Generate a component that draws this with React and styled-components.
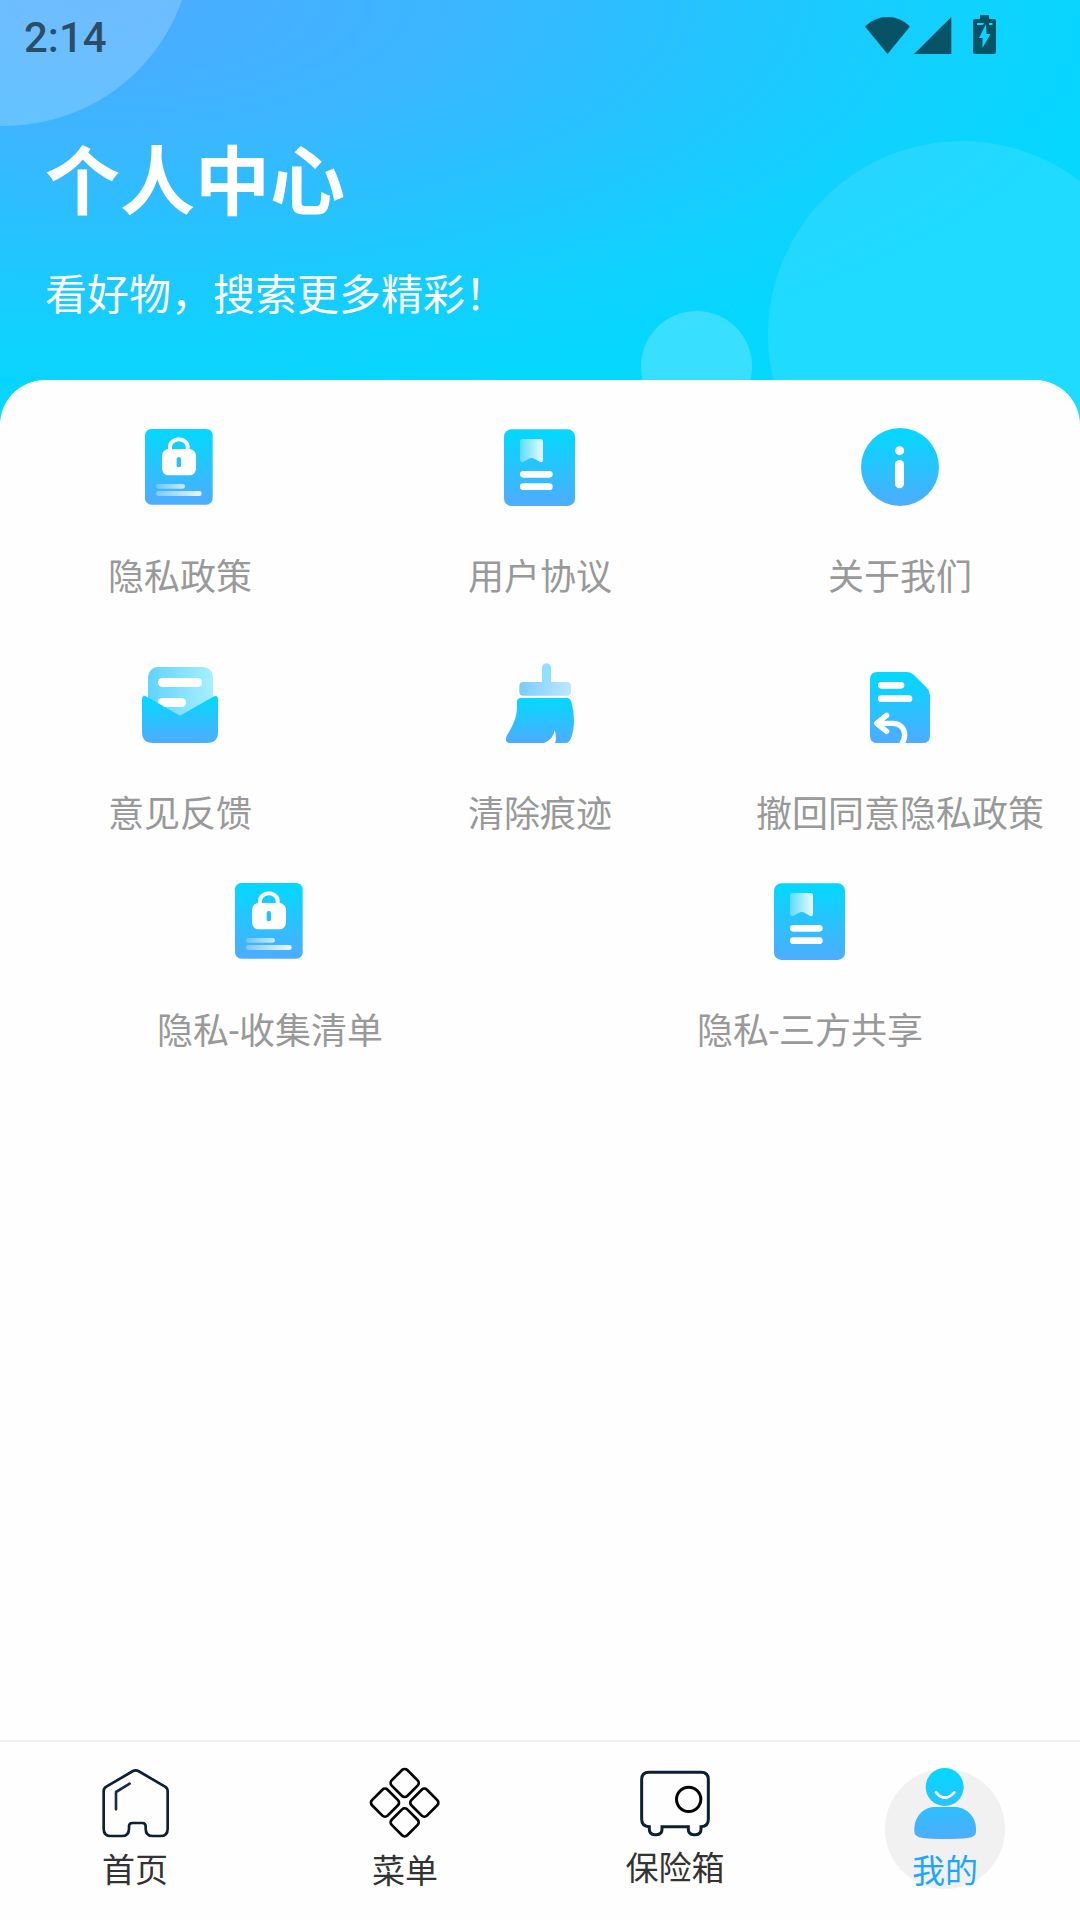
import React, { useState } from 'react'
import styled, { createGlobalStyle } from 'styled-components'

const GlobalStyle = createGlobalStyle`
  * {
    box-sizing: border-box;
  }

  body {
    margin: 0;
    background: #fefefe;
    font-family: "Noto Sans CJK SC", "Noto Sans", sans-serif;
  }
`

/* ---------- gradients shared by all icons ---------- */

const Gradients = () => (
    <Defs aria-hidden="true">
        <defs>
            <linearGradient id="main" x1="0" y1="0" x2="0" y2="1">
                <stop offset="0.05" stopColor="#05d7ff" />
                <stop offset="1" stopColor="#4facff" />
            </linearGradient>
            <linearGradient id="fade" x1="0" y1="0" x2="1" y2="0">
                <stop offset="0" stopColor="#fff" stopOpacity="0.3" />
                <stop offset="1" stopColor="#fff" stopOpacity="0.9" />
            </linearGradient>
            <linearGradient id="paper" x1="0" y1="0" x2="1" y2="0">
                <stop offset="0" stopColor="#60d3ff" />
                <stop offset="1" stopColor="#a6f0ff" />
            </linearGradient>
            <linearGradient id="handle" x1="0" y1="0" x2="1" y2="0">
                <stop offset="0" stopColor="#7accff" />
                <stop offset="1" stopColor="#bce8ff" />
            </linearGradient>
            <linearGradient id="user" gradientUnits="userSpaceOnUse" x1="0" y1="114" x2="0" y2="327">
                <stop offset="0.05" stopColor="#05d7ff" />
                <stop offset="1" stopColor="#4facff" />
            </linearGradient>
        </defs>
    </Defs>
)

/* ---------- menu icons ---------- */

const LockIcon = () => (
    <svg viewBox="135 36 270 270">
        <rect x="165" y="57" width="203" height="227" rx="19" fill="url(#main)" />
        <path d="M240 122v-12a26.500 22 0 0 1 53 0v12" fill="none" stroke="#fff" strokeWidth="12" />
        <rect x="216" y="117" width="102" height="79" rx="20" fill="#fff" />
        <rect x="260" y="141" width="13" height="31" rx="6.500" fill="#26c2ff" />
        <rect x="198" y="222" width="87" height="14" rx="7" fill="url(#fade)" opacity="0.8" />
        <rect x="198" y="243" width="137" height="15" rx="7" fill="url(#fade)" />
    </svg>
)

const BookIcon = () => (
    <svg viewBox="135 36 270 270">
        <rect x="162" y="58" width="213" height="230" rx="22" fill="url(#main)" />
        <path d="M218 87h53q8 0 8 8v55q0 8-8 6q-5-1-15-8l-6-3q-5-2-10 0l-6 3q-10 7-15 8q-9 2-9-6V95q0-8 8-8z" fill="url(#fade)" />
        <rect x="210" y="183" width="98" height="20" rx="10" fill="#fff" />
        <rect x="210" y="220" width="98" height="20" rx="10" fill="#fff" />
    </svg>
)

const InfoIcon = () => (
    <svg viewBox="345 36 270 270">
        <circle cx="480" cy="171" r="117" fill="url(#main)" />
        <circle cx="479" cy="122" r="13.500" fill="#fff" />
        <rect x="465" y="150" width="27" height="85" rx="13.500" fill="#fff" />
    </svg>
)

const MailIcon = () => (
    <svg viewBox="135 27 270 270">
        <rect x="174" y="51" width="195" height="170" rx="30" fill="url(#paper)" />
        <rect x="204" y="84" width="132" height="27" rx="13" fill="#fff" />
        <rect x="204" y="144" width="84" height="27" rx="13" fill="#fff" />
        <path d="M156 147q0-12 12-8l102 58l102-58q12-4 12 8v99q0 33-33 33H189q-33 0-33-33z" fill="url(#main)" />
    </svg>
)

const BroomIcon = () => (
    <svg viewBox="135 27 270 270">
        <path d="M276 98V53a13.500 13.500 0 0 1 27 0v45z" fill="#8fe2ff" />
        <rect x="208" y="96" width="155" height="41" rx="12" fill="url(#handle)" />
        <path d="M213 144h138q9 0 13 11q8 27 8 56q0 30-9 54q-5 14-16 14H315q6-16-1-38q-4 27-32 38H181q-16 0-13-16q1-5 9-17q24-40 24-72v-18q0-12 12-12z" fill="url(#main)" />
    </svg>
)

const RevokeIcon = () => (
    <svg viewBox="345 27 270 270">
        <path d="M412 66h88q13 0 22 9l39 39q9 9 9 22v121q0 22-22 22H412q-22 0-22-22V88q0-22 22-22z" fill="url(#main)" />
        <rect x="414" y="96" width="79" height="20" rx="10" fill="#fff" />
        <rect x="414" y="136" width="103" height="20" rx="10" fill="#fff" />
        <path d="M440 196l-30 24l30 24" fill="none" stroke="#fff" strokeWidth="16" strokeLinecap="round" strokeLinejoin="round" />
        <path d="M414 220h46a34 34 0 0 1 34 34q0 16-10 28" fill="none" stroke="#fff" strokeWidth="16" />
    </svg>
)

/* ---------- bottom bar icons ---------- */

const HomeIcon = () => (
    <svg viewBox="105 99 240 240" fill="none" stroke="#0b2035" strokeWidth="8" strokeLinecap="round" strokeLinejoin="round">
        <path d="M219 123q8-4 16 0l80 47q8 5 8 13v113q0 22-22 22h-22q-22 0-22-22v-7q0-10-10-10h-30q-10 0-10 10v7q0 22-22 22h-32q-22 0-22-22V183q0-8 8-13z" />
        <path d="M168 238v-52l41-25" stroke="#1c2c42" />
    </svg>
)

const GridIcon = () => (
    <svg viewBox="915 99 240 240" fill="none" stroke="#000" strokeWidth="8">
        <rect x="1001" y="126" width="66" height="66" rx="11" transform="rotate(45 1034 159)" />
        <rect x="942" y="185" width="66" height="66" rx="11" transform="rotate(45 975 218)" />
        <rect x="1060" y="185" width="66" height="66" rx="11" transform="rotate(45 1093 218)" />
        <rect x="1001" y="244" width="66" height="66" rx="11" transform="rotate(45 1034 277)" />
    </svg>
)

const SafeIcon = () => (
    <svg viewBox="105 99 240 240" fill="none" stroke="#0b2035" strokeWidth="9">
        <path d="M147 127h156q22 0 22 22v119q0 22-22 22v8q0 16-16 16h-6q-16 0-16-16v-8h-79v8q0 16-16 16h-6q-16 0-16-16v-8q-23 0-23-22V149q0-22 22-22z" />
        <circle cx="266" cy="208" r="36.500" stroke="#000" />
    </svg>
)

const UserIcon = () => (
    <svg viewBox="915 99 240 240">
        <circle cx="1034" cy="171" r="57" fill="url(#user)" />
        <path d="M1008 187q26 32 55 0" fill="none" stroke="#fff" strokeWidth="8" strokeLinecap="round" />
        <path d="M1004 231h60c36 0 64 30 64 66v6c0 14-8 18-24 21c-36 4-100 4-136 0c-16-3-25-7-25-21v-6c0-36 27-66 61-66z" fill="url(#user)" />
    </svg>
)

/* ---------- status bar icons ---------- */

const StatusIcons = () => (
    <StatusSvg width="140" height="44" viewBox="862 12 140 44">
        <path d="M887.500 54L865 26.500Q874 17 887.500 17T910 26.500z" />
        <path d="M914 54L951.300 17v37z" />
        <path fillRule="evenodd" d="M980 15h9v4h5q2 0 2 2v31q0 2-2 2h-19q-2 0-2-2V21q0-2 2-2h5zM977 23v2h6l1-2zM986 24l-7 14h3.500v10l8-14h-4zM989 23v2h3.500v-2z" />
    </StatusSvg>
)

const rows = [
    [
        { label: '隐私政策', icon: LockIcon },
        { label: '用户协议', icon: BookIcon },
        { label: '关于我们', icon: InfoIcon },
    ],
    [
        { label: '意见反馈', icon: MailIcon },
        { label: '清除痕迹', icon: BroomIcon },
        { label: '撤回同意隐私政策', icon: RevokeIcon },
    ],
    [
        { label: '隐私-收集清单', icon: LockIcon },
        { label: '隐私-三方共享', icon: BookIcon },
    ],
]

const tabs = [
    { label: '首页', icon: HomeIcon, lift: 1 },
    { label: '菜单', icon: GridIcon },
    { label: '保险箱', icon: SafeIcon, lift: 3 },
    { label: '我的', icon: UserIcon },
]

const App = () => {
    const [current, setCurrent] = useState(3);

    return (
        <Page>
            <GlobalStyle />
            <Gradients />
            <Header>
                <Bubble $x={4} $y={-63} $r={189} $alpha={0.2} />
                <Bubble $x={962} $y={335} $r={194} $alpha={0.1} />
                <Bubble $x={696} $y={366} $r={55.5} $alpha={0.21} />
                <StatusBar>
                    <Time>2:14</Time>
                    <StatusIcons />
                </StatusBar>
                <Title>个人中心</Title>
                <Subtitle>看好物，搜索更多精彩！</Subtitle>
            </Header>

            <Sheet>
                {rows.map((row, index) => (
                    <Row key={index} $gap={index === 1 ? 35 : 55}>
                        {row.map(({ label, icon: Icon }) => (
                            <Item key={label}>
                                <Icon />
                                <Label>{label}</Label>
                            </Item>
                        ))}
                    </Row>
                ))}
            </Sheet>

            <TabBar>
                {tabs.map(({ label, icon: Icon, lift }, index) => (
                    <Tab key={label} $active={index === current} onClick={() => setCurrent(index)}>
                        <Icon />
                        <TabLabel $lift={lift}>{label}</TabLabel>
                    </Tab>
                ))}
            </TabBar>
        </Page>
    )
}

export default App

const Page = styled.div`
  width: 1080px;
  height: 1920px;
  display: flex;
  flex-direction: column;
  overflow: hidden;
`

const Defs = styled.svg`
  position: absolute;
  width: 0;
  height: 0;
`

const Header = styled.header`
  position: relative;
  height: 430px;
  flex-shrink: 0;
  overflow: hidden;
  color: #fff;
  background: radial-gradient(
    ellipse 1080px 420px at 90px 0,
    #4aacff 0%,
    #48aeff 10%,
    #3cb5ff 33%,
    #27c2ff 55%,
    #10d1ff 80%,
    #05d7ff 97%
  );
`

/* decorative circle, placed by its centre */
const Bubble = styled.div`
  position: absolute;
  left: ${props => props.$x - props.$r}px;
  top: ${props => props.$y - props.$r}px;
  width: ${props => props.$r * 2}px;
  height: ${props => props.$r * 2}px;
  border-radius: 50%;
  background: rgba(255, 255, 255, ${props => props.$alpha});
`

const StatusBar = styled.div`
  position: relative;
  height: 74px;
  padding: 0 78px 0 24px;
  display: flex;
  align-items: center;
  justify-content: space-between;
  color: rgba(0, 0, 0, 0.6);
`

const Time = styled.span`
  padding-top: 2px;
  font: 500 42px/50px Roboto, sans-serif;
`

const StatusSvg = styled.svg`
  fill: currentColor;
  margin-bottom: 6px;
`

const Title = styled.h1`
  position: relative;
  margin: 53px 0 0 45px;
  font-size: 75px;
  line-height: 100px;
  font-weight: 700;
`

const Subtitle = styled.p`
  position: relative;
  margin: 35px 0 0 45px;
  font-size: 42px;
  line-height: 60px;
`

const Sheet = styled.main`
  position: relative;
  flex: 1;
  margin-top: -50px;
  padding-top: 42px;
  border-radius: 45px 45px 0 0;
  background: #fefefe;
`

const Row = styled.div`
  display: flex;
  margin-bottom: ${props => props.$gap}px;
`

const Item = styled.div`
  flex: 1 1 0;
  min-width: 0;
  display: flex;
  flex-direction: column;
  align-items: center;
  gap: 40px;

  svg {
    width: 90px;
    height: 90px;
  }
`

const Label = styled.span`
  font-family: Roboto, "Noto Sans CJK SC", sans-serif;
  font-size: 36px;
  line-height: 52px;
  color: #999;
  white-space: nowrap;
`

const TabBar = styled.nav`
  height: 180px;
  flex-shrink: 0;
  display: flex;
  border-top: 2px solid #f0f0f0;
  background: #fefefe;
`

const Tab = styled.div`
  flex: 1;
  padding-top: 21px;
  display: flex;
  flex-direction: column;
  align-items: center;
  cursor: pointer;
  color: ${props => props.$active ? '#1ea5ff' : '#333'};
  background: ${props => props.$active
    ? 'radial-gradient(circle at 50% 87px, #f1f1f1 59.5px, transparent 60.5px)'
    : 'none'};

  svg {
    width: 80px;
    height: 80px;
  }
`

const TabLabel = styled.span`
  margin-top: ${props => 1 - (props.$lift || 0)}px;
  font-size: 33px;
  line-height: 50px;
`
